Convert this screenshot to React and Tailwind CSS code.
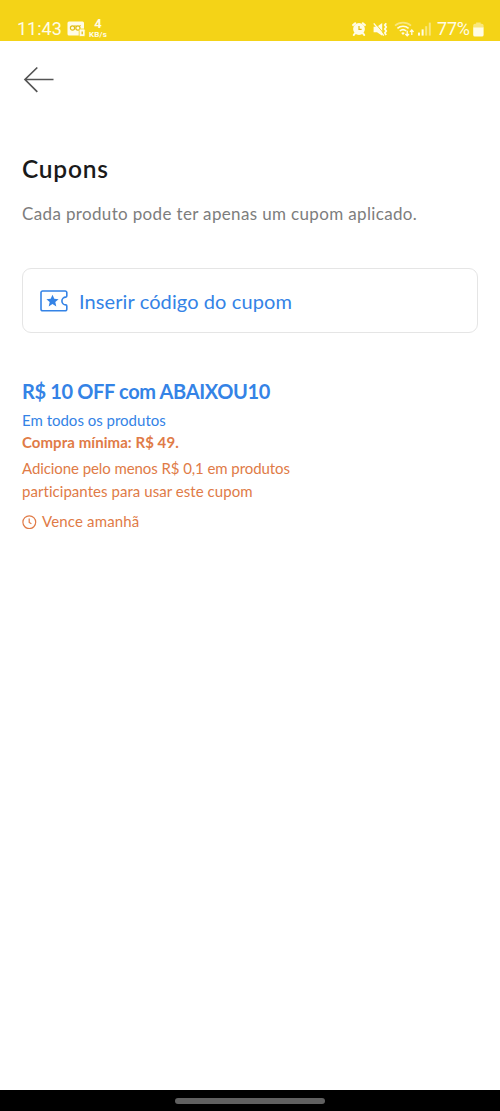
function NotificationIcon() {
  return (
    <svg width="19" height="16" viewBox="0 0 19 16" fill="none">
      <rect x="0.5" y="0.5" width="16.5" height="14" rx="1.5" fill="#fffce6" />
      <circle cx="5.5" cy="7" r="2.1" stroke="#e0bd12" strokeWidth="1.2" />
      <circle cx="10.9" cy="7" r="2.1" stroke="#e0bd12" strokeWidth="1.2" />
      <path d="M6.9 5h2.6M12.7 5l.8-1" stroke="#e0bd12" strokeWidth="1" />
      <rect x="12.2" y="8" width="5.9" height="7.5" rx="1.2" fill="#fffce6" stroke="#f4d317" strokeWidth="0.8" />
      <path d="M15.2 10.4v2.8" stroke="#e0bd12" strokeWidth="1.3" />
    </svg>
  );
}

function AlarmIcon() {
  return (
    <svg width="14" height="14" viewBox="0 0 14 14" fill="none">
      <circle cx="7" cy="7" r="5.9" fill="#fffce6" />
      <path d="M1.1 3.1 3.2 1.2M12.9 3.1 10.8 1.2M2.8 11.6l-1 1.4M11.2 11.6l1 1.4" stroke="#fffce6" strokeWidth="2" strokeLinecap="round" />
      <path d="M7 3.9v3.5h2.6" stroke="#e0bd12" strokeWidth="1.2" />
    </svg>
  );
}

function MuteIcon() {
  return (
    <svg width="15" height="15" viewBox="0 0 15 15" fill="none">
      <path d="M.6 4.8h3.4L9.2 1v12.8L4 10.2H.6z" fill="#fffce6" />
      <path d="m13.2 1.2-1.4 1.9 1.4 2-1.4 2 1.4 2-1.4 2 1.4 2" stroke="#fffce6" strokeWidth="1.8" />
      <path d="m2.2 1.2 8.6 10.4" stroke="#f4d317" strokeWidth="1" />
      <path d="m.8 1.4 10 12.2" stroke="#fffce6" strokeWidth="1.4" />
    </svg>
  );
}

function WifiIcon() {
  return (
    <svg width="21" height="16" viewBox="0 0 21 16" fill="none">
      <path d="M1 4.7a12 12 0 0 1 16 0" stroke="#f9e77d" strokeWidth="1.6" />
      <path d="M3.4 7.4a8.5 8.5 0 0 1 11.2 0M5.8 10a5 5 0 0 1 6.4 0" stroke="#fffce6" strokeWidth="1.6" />
      <path d="m7.2 12 1.8 2 1.8-2a2.6 2.6 0 0 0-3.6 0Z" fill="#fffce6" />
      <path d="M13.2 9.8v5m-1.8-1.8 1.8 1.9 1.8-1.9M17.8 14v-5m-1.8 1.9 1.8-1.9 1.8 1.9" stroke="#fffce6" strokeWidth="1.3" />
    </svg>
  );
}

function SignalIcon() {
  return (
    <svg width="14" height="14" viewBox="0 0 14 14">
      <rect x="0" y="10.6" width="2" height="3" fill="#fffce6" />
      <rect x="3.6" y="7.4" width="2" height="6.2" fill="#fffce6" />
      <rect x="7.2" y="4.2" width="2" height="9.4" fill="#f9e77d" />
      <rect x="10.8" y="0.6" width="2" height="13" fill="#f9e77d" />
    </svg>
  );
}

function BatteryIcon() {
  return (
    <svg width="11" height="15" viewBox="0 0 11 15">
      <path d="M3.1 0.4h4.6v1.3h1.2A1.7 1.7 0 0 1 10.6 3.4V6H0.2V3.4A1.7 1.7 0 0 1 1.9 1.7h1.2z" fill="#f9e77d" />
      <path d="M0.2 5.5h10.4v7.4a1.7 1.7 0 0 1-1.7 1.7h-7a1.7 1.7 0 0 1-1.7-1.7z" fill="#fffce6" />
    </svg>
  );
}

function StatusBar() {
  return (
    <header className="flex h-[41px] items-end justify-between bg-[#f4d317] pr-[16px] pb-[2px] pl-[17px] font-[Roboto,sans-serif] text-[#fffce6]">
      <div className="flex items-center">
        <span className="w-[50px] text-[18px] leading-[18px] whitespace-nowrap">11:43</span>
        <NotificationIcon />
        <div className="ml-[2px] flex w-[20px] flex-col items-center">
          <span className="text-[13px] leading-[12px] font-bold">4</span>
          <span className="text-[8px] leading-[9px] font-bold tracking-[0.2px]">KB/s</span>
        </div>
      </div>
      <div className="flex items-center pb-px">
        <AlarmIcon />
        <span className="ml-[7px]"><MuteIcon /></span>
        <span className="ml-[6px]"><WifiIcon /></span>
        <span className="ml-[3px]"><SignalIcon /></span>
        <span className="ml-[5px] w-[36px] text-[18px] leading-[18px] tracking-[-0.2px] whitespace-nowrap">77%</span>
        <BatteryIcon />
      </div>
    </header>
  );
}

function CouponIcon() {
  return (
    <svg width="28" height="22" viewBox="0 0 28 22" fill="none">
      <path
        d="M2.6 1h22.6A1.6 1.6 0 0 1 26.8 2.6v3.5a1 1 0 0 1-1 1 3.9 3.9 0 0 0 0 7.8 1 1 0 0 1 1 1v3.3a1.6 1.6 0 0 1-1.6 1.6H2.6A1.6 1.6 0 0 1 1 19.2V2.6A1.6 1.6 0 0 1 2.6 1Z"
        stroke="#3483e6"
        strokeWidth="1.6"
        strokeLinejoin="round"
      />
      <path d="m12.5 4.8 1.8 4 4.3.4-3.3 2.8 1 4.4-3.8-2.4-3.8 2.4 1-4.4-3.3-2.8 4.3-.4z" fill="#3483e6" />
    </svg>
  );
}

export default function App() {
  return (
    <div className="flex h-[1111px] w-[500px] flex-col bg-white font-[Lato,sans-serif]">
      <StatusBar />

      <main className="flex-1 px-[22px]">
        <button className="mt-[25px] block h-[28px]" aria-label="Voltar">
          <svg width="33" height="28" viewBox="0 0 33 28" fill="none" stroke="#555" strokeWidth="1.7">
            <path d="M31.5 13.5H3M15.3 1.5 3 13.5l12.3 12.3" />
          </svg>
        </button>

        <h1 className="mt-[59px] text-[24.5px] leading-[32px] font-semibold tracking-[0.75px] whitespace-nowrap text-[#1a1a1a]">
          Cupons
        </h1>
        <p className="mt-[17px] text-[17px] leading-[24px] tracking-[0.35px] whitespace-nowrap text-[#7d7d7d]">
          Cada produto pode ter apenas um cupom aplicado.
        </p>

        {/* Coupon code entry */}
        <button className="mt-[42px] flex h-[65px] w-[456px] items-center rounded-[9px] border-[1.5px] border-[#e5e5e5] pl-[17px] text-[#3483e6]">
          <CouponIcon />
          <span className="ml-[11px] text-[20px] leading-[28px] tracking-[0.1px] whitespace-nowrap">Inserir código do cupom</span>
        </button>

        {/* Available coupon */}
        <section className="mt-[44px] text-[15px] whitespace-nowrap text-[#e07b47]">
          <h2 className="text-[20px] leading-[28px] font-bold tracking-[-0.35px] text-[#3483e6]">R$ 10 OFF com ABAIXOU10</h2>
          <p className="mt-[4px] leading-[22px] text-[#3483e6]">Em todos os produtos</p>
          <p className="leading-[23px] font-bold tracking-[0.06px]">Compra mínima: R$ 49.</p>
          <p className="mt-[3px] leading-[23px]">
            <span className="tracking-[-0.08px]">Adicione pelo menos R$ 0,1 em produtos</span>
            <br />
            <span className="tracking-[0.05px]">participantes para usar este cupom</span>
          </p>
          <div className="mt-[7px] flex h-[23px] items-center">
            <svg width="15" height="15" viewBox="0 0 15 15" fill="none" stroke="#e07b47" strokeWidth="1.2">
              <circle cx="7.3" cy="8.2" r="6.4" />
              <path d="M7.2 4.5v4l2.2 1.3" />
            </svg>
            <span className="ml-[5px] tracking-[0.16px]">Vence amanhã</span>
          </div>
        </section>
      </main>

      <footer className="flex h-[21px] justify-center bg-black pt-[8px]">
        <div className="h-[6px] w-[150px] rounded-full bg-[#606060]" />
      </footer>
    </div>
  );
}
